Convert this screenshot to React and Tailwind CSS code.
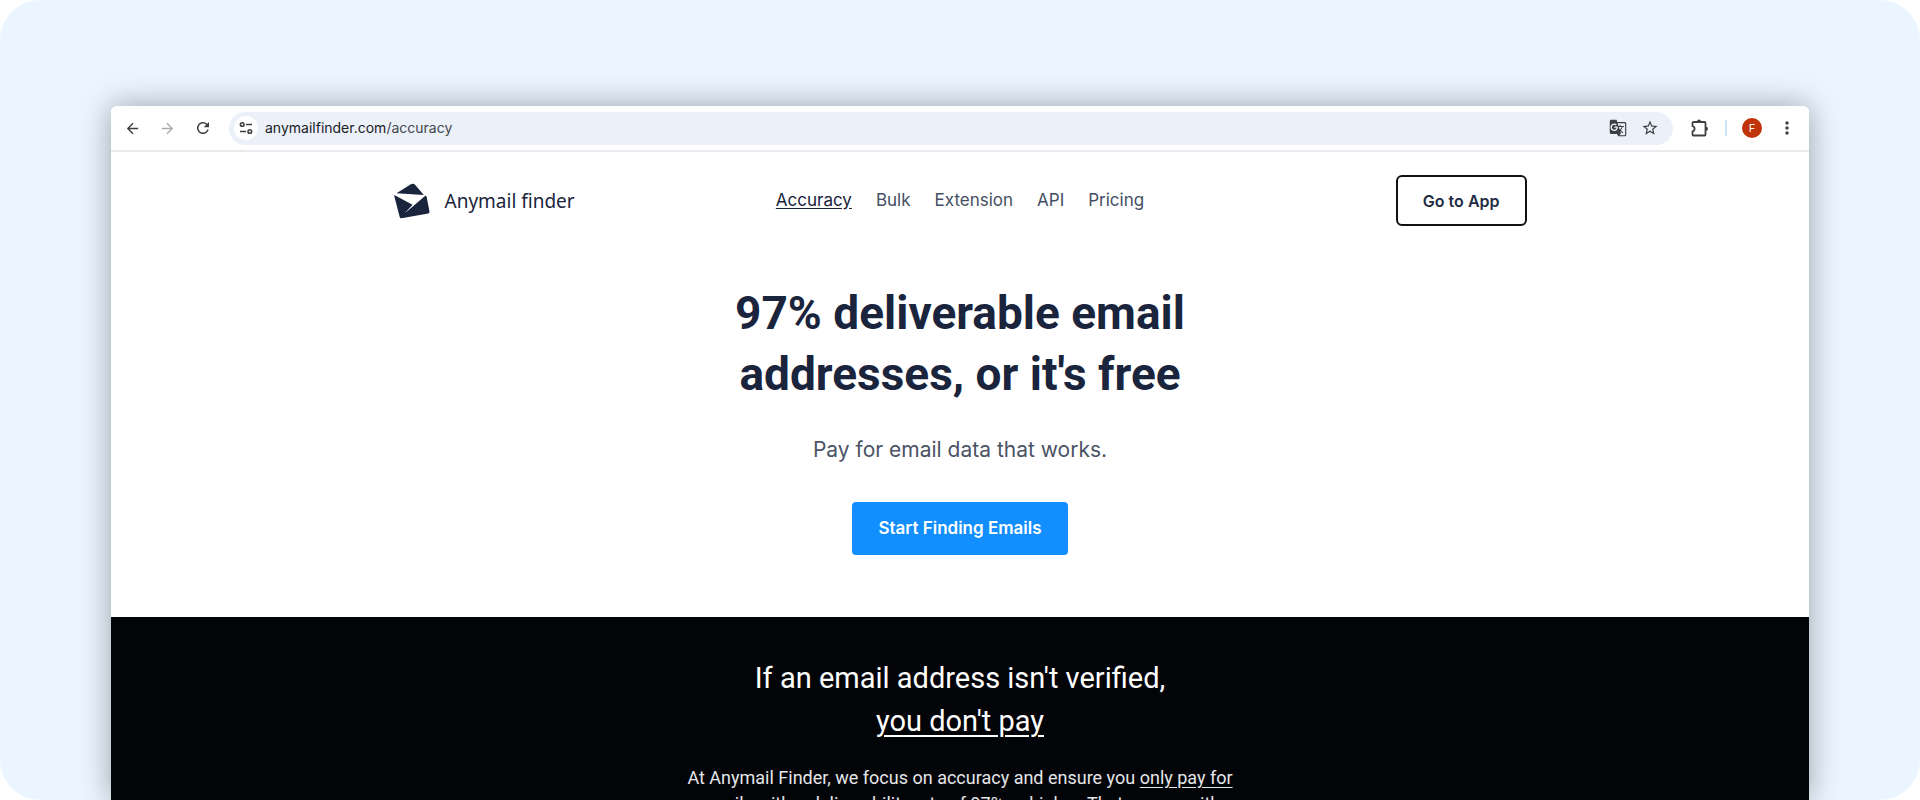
import { MdArrowBack, MdArrowForward, MdGTranslate, MdMoreVert, MdRefresh, MdStarOutline } from 'react-icons/md';

const navLinks = [
  { label: 'Accuracy', href: '#accuracy', active: true },
  { label: 'Bulk', href: '#bulk' },
  { label: 'Extension', href: '#extension' },
  { label: 'API', href: '#api' },
  { label: 'Pricing', href: '#pricing' },
];

const TuneIcon = () => (
  <svg width="14" height="14" viewBox="0 0 14 14" fill="none" stroke="#3c4043" strokeWidth="1.6">
    <circle cx="3.2" cy="3.5" r="1.8" />
    <path d="M7 3.500h6" />
    <circle cx="10.8" cy="10.5" r="1.8" />
    <path d="M1 10.500h6" />
  </svg>
);

const PuzzleIcon = () => (
  <svg width="18" height="18" viewBox="0 0 18 18">
    <path
      d="M2.500 3h11a1 1 0 0 1 1 1v11.500a1 1 0 0 1-1 1h-11a1 1 0 0 1-1-1v-3.200a2.600 2.600 0 0 0 0-5.100V4a1 1 0 0 1 1-1z"
      fill="none"
      stroke="#3c4043"
      strokeWidth="1.8"
      strokeLinejoin="round"
    />
    <path d="M6 2.500a2 2 0 0 1 4 0zM15 7.700a2 2 0 0 1 0 4z" fill="#3c4043" />
  </svg>
);

const LogoIcon = () => (
  <svg width="36" height="36" viewBox="0 0 36 36" fill="#1a243c">
    <path d="M2.500 10.200 16.500 1.400q3-1.700 5 .8l8.300 9.800z" />
    <path d="M.8 12.200 18.500 21.800l-8 8.600L31 13q1.200-.8 1.600.8l2.900 14.800q.2 1.500-1.200 1.800L7.500 35.300q-1.500.2-1.800-1.200L.3 13.200q-.2-1.200.5-1z" />
  </svg>
);

const BrowserToolbar = () => (
  <div className="flex items-center h-[46px] pl-[11px] pr-3 border-b-2 border-[#e9eaec] bg-white">
    <button type="button" aria-label="Back" className="p-[2px] text-[#3c4043]">
      <MdArrowBack size={17} />
    </button>
    <button type="button" aria-label="Forward" className="p-[2px] ml-[14px] text-[#aaacae]">
      <MdArrowForward size={17} />
    </button>
    <button type="button" aria-label="Reload" className="p-[2px] ml-[14px] text-[#3c4043]">
      <MdRefresh size={18} />
    </button>
    {/* Address bar */}
    <div className="flex flex-1 items-center h-[33px] ml-[15px] pl-[5px] pr-[14px] rounded-full bg-[#ebf0f9]">
      <button type="button" aria-label="Site information" className="flex items-center justify-center size-6 rounded-full bg-white">
        <TuneIcon />
      </button>
      <p className="flex-1 ml-[7px] text-sm text-[#202124]">
        anymailfinder.com<span className="text-[#44474b]">/accuracy</span>
      </p>
      <button type="button" aria-label="Translate this page" className="text-[#3c4043]">
        <MdGTranslate size={18} />
      </button>
      <button type="button" aria-label="Bookmark this page" className="ml-[14px] text-[#3c4043]">
        <MdStarOutline size={18} />
      </button>
    </div>
    <button type="button" aria-label="Extensions" className="ml-[18px]">
      <PuzzleIcon />
    </button>
    <div className="w-[2px] h-4 ml-4 bg-[#cfe4fc]" />
    <button type="button" aria-label="Profile" className="flex items-center justify-center size-5 ml-[15px] rounded-full bg-[#c0330b] text-[11px] text-white">
      F
    </button>
    <button type="button" aria-label="Menu" className="ml-[15px] text-[#3c4043]">
      <MdMoreVert size={20} />
    </button>
  </div>
);

const SiteHeader = () => (
  <header className="grid grid-cols-[1fr_auto_1fr] items-center w-full max-w-[1133px] mx-auto pt-[23px]">
    <a href="#home" className="flex items-center gap-[15px] text-[#1a243c]">
      <LogoIcon />
      <span className="font-['Noto_Sans',sans-serif] text-[19px] leading-6">Anymail finder</span>
    </a>
    <nav className="flex gap-6 text-[17px] text-[#454f63]">
      {navLinks.map((link) => (
        <a
          key={link.label}
          href={link.href}
          className={link.active ? 'text-[#1a243c] underline underline-offset-2' : ''}
        >
          {link.label}
        </a>
      ))}
    </nav>
    <button
      type="button"
      className="justify-self-end h-[51px] px-[25px] border-2 border-[#111111] rounded-md text-base font-semibold text-[#1f2b45]"
    >
      Go to App
    </button>
  </header>
);

const Hero = () => (
  <section className="flex flex-col items-center pt-[57px] pb-[62px] text-center">
    <h1 className="font-['Roboto',sans-serif] text-[46px] leading-[61px] font-bold text-[#1a243c]">
      97% deliverable email
      <br />
      addresses, or it&apos;s free
    </h1>
    <p className="mt-[29px] text-[21px] leading-8 text-[#4b5364]">Pay for email data that works.</p>
    <button type="button" className="h-[53px] mt-9 px-[26px] rounded bg-[#128eff] text-[17px] font-semibold text-white">
      Start Finding Emails
    </button>
  </section>
);

const Guarantee = () => (
  <section className="flex-1 pt-10 bg-[#030408] text-center text-white">
    <h2 className="font-['Roboto',sans-serif] text-[29px] leading-[43px]">
      If an email address isn&apos;t verified,
      <br />
      <span className="underline underline-offset-4 decoration-2">you don&apos;t pay</span>
    </h2>
    <p className="mt-[22px] font-['Roboto',sans-serif] text-lg leading-[26px] text-[#e4e6e8]">
      At Anymail Finder, we focus on accuracy and ensure you{' '}
      <a href="#pricing" className="underline underline-offset-3">only pay for</a>
      <br />
      emails with a deliverability rate of 97% or higher. That means with
    </p>
  </section>
);

const App = () => (
  <div className="bg-white">
    <main className="flex h-screen px-[111px] pt-[106px] overflow-hidden rounded-[40px] bg-[#ebf5ff] font-['Inter',sans-serif]">
      <div className="flex flex-col flex-1 rounded-t-md bg-white shadow-[0_0_30px_rgba(0,0,0,0.35)]">
        <div className="overflow-hidden rounded-t-md shrink-0">
          <BrowserToolbar />
        </div>
        <SiteHeader />
        <Hero />
        <Guarantee />
      </div>
    </main>
  </div>
);

export default App;
